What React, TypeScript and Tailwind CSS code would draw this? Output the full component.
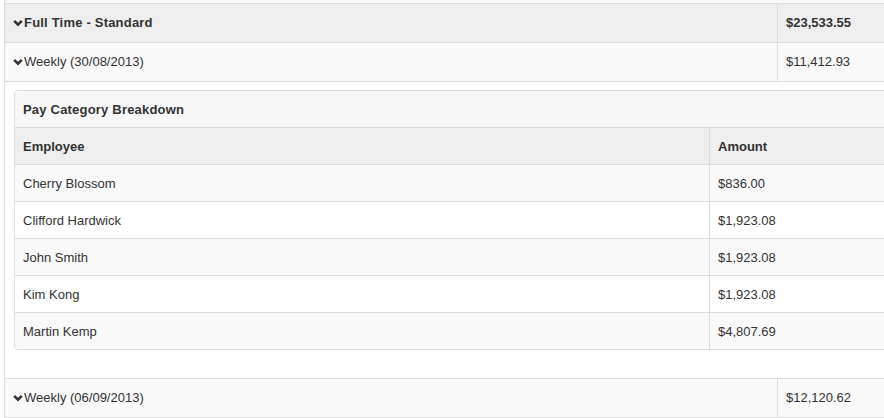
import React from 'react';

const employees = [
  { name: 'Cherry Blossom', amount: '$836.00' },
  { name: 'Clifford Hardwick', amount: '$1,923.08' },
  { name: 'John Smith', amount: '$1,923.08' },
  { name: 'Kim Kong', amount: '$1,923.08' },
  { name: 'Martin Kemp', amount: '$4,807.69' },
];

function Chevron() {
  return (
    <svg width="10" height="8" viewBox="0 0 10 8" className="mr-[1px] shrink-0">
      <polyline points="1.2,1.8 5,5.6 8.8,1.8" fill="none" stroke="#333" strokeWidth="2.6" />
    </svg>
  );
}

function GroupRow({ label, amount, bold, bg }: { label: string; amount: string; bold?: boolean; bg: string }) {
  return (
    <div className={`flex h-[39px] border-t border-[#ddd] ${bg} ${bold ? 'font-bold' : ''}`}>
      <div className="w-[772px] flex items-center pl-[8px]">
        <Chevron />
        <span className={bold ? 'tracking-[0.2px]' : ''}>{label}</span>
      </div>
      <div className="flex-1 flex items-center pl-[8px] border-l border-[#ddd]">{amount}</div>
    </div>
  );
}

export default function App() {
  return (
    <div className="w-[884px] h-[418px] overflow-hidden bg-white text-[13px] text-[#333] font-['Liberation_Sans',Arial,sans-serif]">
      <div className="ml-[4px] w-[960px] border-l border-b border-[#ddd]">
        <div className="h-[3px] bg-[#f9f9f9]" />
        <GroupRow label="Full Time - Standard" amount="$23,533.55" bold bg="bg-[#eeeeee]" />
        <GroupRow label="Weekly (30/08/2013)" amount="$11,412.93" bg="bg-[#f9f9f9]" />

        <div className="border-t border-[#ddd] bg-white pt-[8px] pl-[9px] pb-[28px]">
          <div className="border border-[#ddd] rounded-[4px] bg-white overflow-hidden">
            <div className="h-[36px] flex items-center pl-[8px] pt-[2px] font-bold tracking-[0.2px] bg-[#f7f7f7]">
              Pay Category Breakdown
            </div>
            <div className="flex h-[37px] border-t border-[#ddd] bg-[#eeeeee] font-bold">
              <div className="w-[694px] flex items-center pl-[8px] pt-[2px]">Employee</div>
              <div className="flex-1 flex items-center pl-[8px] pt-[2px] border-l border-[#ddd]">Amount</div>
            </div>
            {employees.map((e, i) => (
              <div
                key={e.name}
                className={`flex h-[37px] border-t border-[#ddd] ${i % 2 === 0 ? 'bg-[#f9f9f9]' : 'bg-white'}`}
              >
                <div className="w-[694px] flex items-center pl-[8px] pt-[2px]">{e.name}</div>
                <div className="flex-1 flex items-center pl-[8px] pt-[2px] border-l border-[#ddd]">{e.amount}</div>
              </div>
            ))}
          </div>
        </div>

        <GroupRow label="Weekly (06/09/2013)" amount="$12,120.62" bg="bg-[#f9f9f9]" />
      </div>
    </div>
  );
}
